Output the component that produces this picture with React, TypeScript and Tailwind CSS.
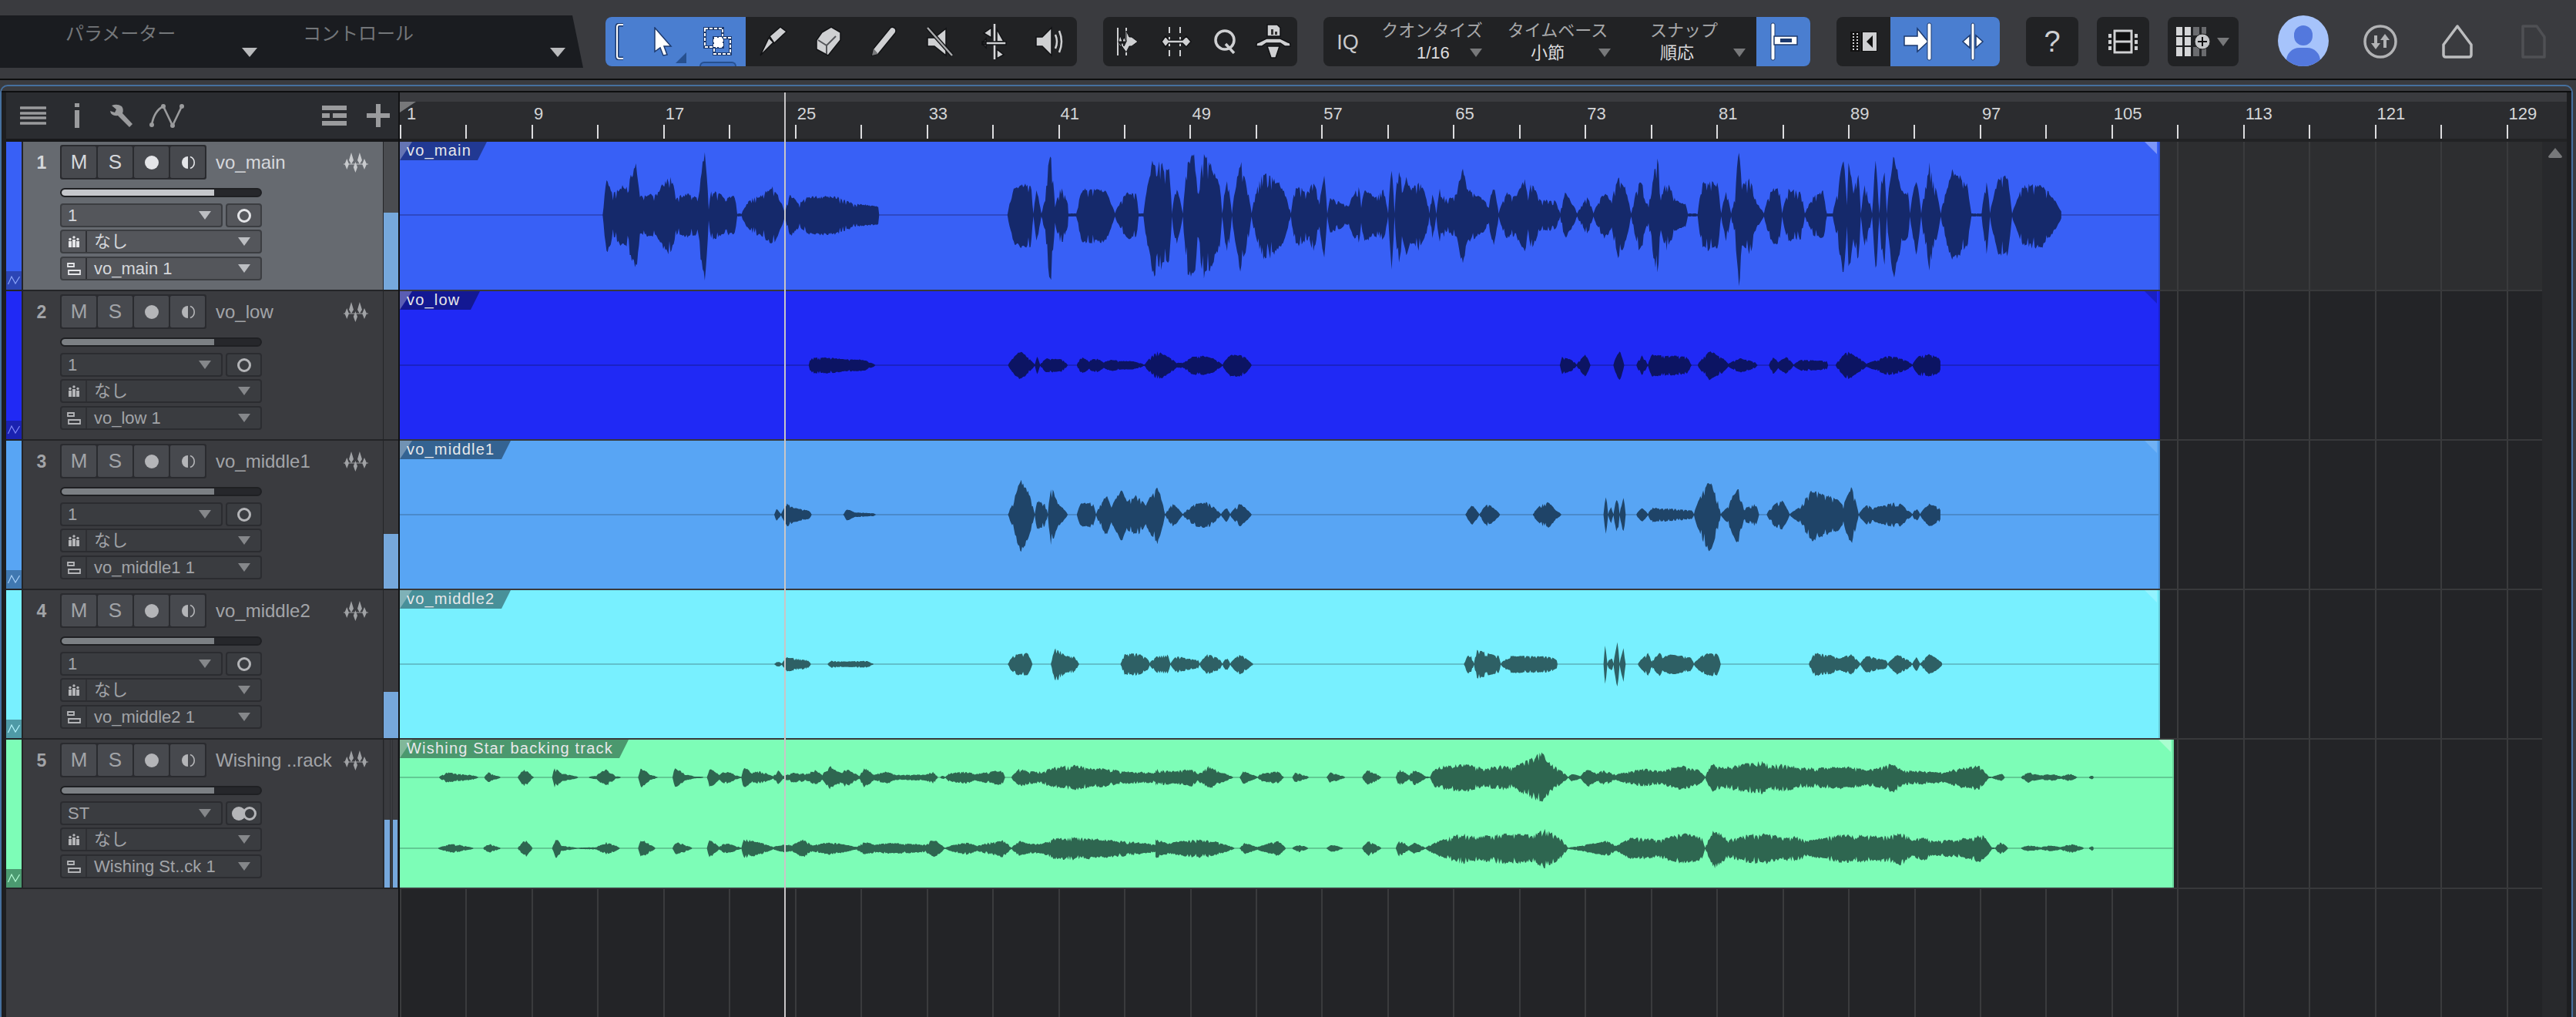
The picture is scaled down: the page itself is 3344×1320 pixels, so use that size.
import React from "react";

// waveform envelopes: [x, amplitude] pairs read off the picture
const mainA = [129,0,137,48,150,28,165,38,180,40,197,70,205,25,225,28,240,28,265,52,280,25,300,28,322,25,337,85,345,10,350,33,375,25,398,25,403,2,412,2,430,22,455,28,475,38,490,20,500,2,510,27,530,15,545,25,570,25,600,25,640,15,690,12,692,0,953,0,968,40,985,42,1000,42,1006,2,1012,33,1022,2,1030,20,1040,90,1050,10,1062,38,1076,15,1077,2,1093,2,1105,35,1125,35,1150,35,1172,2,1195,30,1215,30,1220,2,1230,2,1250,77,1262,70,1282,60,1288,2,1296,40,1310,2,1320,75,1333,80,1340,30,1353,82,1385,40,1390,2,1400,50,1410,2,1427,72,1440,40,1450,2,1472,60,1510,40,1530,2,1540,40,1568,30];
const mainB = [0,35,8,47,20,15,30,55,36,2,42,22,80,12,100,40,105,10,112,35,130,25,150,33,160,2,167,67,173,2,180,62,190,35,197,50,205,35,222,45,240,20,244,2,250,30,258,2,265,35,280,20,300,30,312,63,320,35,345,25,365,15,375,38,385,2,400,30,420,25,438,47,445,20,450,43,470,20,500,20,510,2,520,30,535,15,545,2,565,25,578,2,590,20,600,30,615,17,628,55,640,40,655,2,672,48,690,10,708,80,715,20,725,45,745,20,765,15,770,2,790,2,800,45,815,45,830,43,838,2,848,33,858,2,866,25,874,90,880,38,897,50,910,15,925,2,940,35,955,37,962,2,975,35,1000,30,1008,2,1025,25,1045,32,1053,2,1065,2,1075,30,1087,78,1094,15,1097,72,1107,30,1117,60,1122,2,1130,42,1145,2,1152,75,1160,2,1168,80,1175,2,1188,83,1205,33,1218,30,1222,2,1235,50,1245,2,1262,70,1272,40,1285,2,1308,60,1340,40,1347,2,1368,2,1378,50,1385,2,1402,50,1420,52,1430,2,1440,20,1452,40,1490,42,1510,25,1532,2];
const lowK = [50,0,53,28,75,28,95,22,120,20,135,5,137,0,310,0,318,30,326,50,335,30,345,2,348,30,352,2,360,25,380,22,388,2,400,2,406,30,415,15,425,25,435,10,445,20,455,15,470,15,480,10,488,2,505,50,520,30,530,8,540,10,550,30,560,35,575,28,590,2,600,38,615,38,628,2,1030,0,1033,30,1045,20,1052,2,1063,38,1070,2,1100,2,1105,40,1108,50,1114,2,1130,2,1137,35,1145,2,1150,38,1170,36,1195,30,1202,2,1210,2,1225,50,1240,30,1250,5,1265,25,1285,10,1288,2,1303,2,1308,30,1315,10,1325,30,1335,2,1345,20,1378,15,1380,2,1390,2,1405,50,1420,25,1430,5,1445,20,1460,35,1480,20,1490,2,1498,35,1512,40,1525,25,1528,2];
const mid1K = [5,0,8,20,14,2,22,40,30,25,50,15,54,2,95,0,100,20,110,8,135,5,138,0,310,0,318,50,326,125,335,90,345,2,348,50,358,40,362,2,366,100,375,40,388,2,400,2,405,40,420,45,425,2,438,70,445,25,458,90,465,50,478,70,490,35,505,100,515,2,525,40,538,2,555,40,570,45,588,2,595,25,600,2,612,40,628,2,907,2,915,35,925,2,935,40,952,2,995,2,1005,35,1015,45,1025,15,1032,2,1087,2,1090,70,1093,2,1097,30,1100,2,1105,70,1108,2,1113,60,1116,2,1130,2,1137,25,1145,2,1150,25,1185,20,1202,15,1205,2,1212,60,1225,125,1235,60,1240,2,1250,30,1262,100,1270,20,1285,40,1290,2,1300,2,1310,40,1320,50,1330,2,1345,30,1358,90,1375,70,1390,60,1400,30,1410,100,1420,2,1430,35,1440,25,1455,35,1470,45,1485,15,1490,2,1495,25,1500,2,1512,40,1525,25,1528,2];
const mid2K = [5,0,10,10,15,2,22,25,48,15,53,2,75,2,80,12,90,10,100,10,125,12,135,0,310,2,318,35,335,40,342,2,366,2,372,60,385,30,395,30,403,2,457,2,462,35,478,40,492,20,495,5,505,30,518,35,522,2,530,30,545,20,558,15,560,2,570,35,585,20,590,2,595,25,600,2,612,35,628,5,630,2,905,2,912,40,918,2,922,52,935,40,950,30,953,2,965,30,1015,28,1026,15,1027,2,1087,2,1089,70,1092,2,1097,30,1100,2,1105,80,1108,2,1113,60,1116,2,1132,2,1145,40,1150,10,1160,40,1165,25,1175,35,1200,25,1205,2,1215,30,1225,40,1235,40,1240,2,1355,2,1362,40,1380,35,1395,20,1410,35,1422,2,1430,30,1445,20,1455,15,1458,2,1470,35,1485,15,1490,2,1495,25,1500,2,1512,35,1530,2];
const backLA = [110,2,125,20,145,15,175,10,190,2,202,2,210,20,225,8,235,2,270,2,283,35,300,5,303,2,340,2,345,40,360,15,380,8,393,2,415,2,430,8,450,33,470,5,480,2,515,2,520,40,540,10,555,2,585,2,590,40,610,12,630,4,648,2,655,2,660,38,680,10,692,25,720,5,725,2,728,45,745,20,762,25,790,5,800,28,810,5,830,20,860,15,875,30,890,10,905,45,920,25,938,35,965,5,975,38,995,10,1020,25,1040,10,1100,12,1115,25,1125,2,1130,2,1135,8,1140,2,1145,15,1185,25,1200,12,1255,30,1262,2,1275,2,1290,35,1310,25,1340,25,1360,40,1398,50,1430,40,1470,35,1500,25,1568,20];
const backLB = [0,35,10,30,25,25,55,35,65,15,80,45,95,25,115,5,118,2,128,2,133,25,150,8,155,2,160,15,185,25,195,2,208,2,212,20,233,2,260,2,265,20,288,2,314,2,322,30,343,2,365,2,370,32,385,8,393,30,410,5,417,2,425,40,445,50,470,55,500,35,525,50,545,40,585,100,600,55,627,2,632,15,645,5,657,35,670,15,680,30,700,10,710,20,740,35,770,25,795,50,825,30,835,2,845,55,860,40,920,65,935,50,950,55,980,40,1010,40,1050,45,1080,30,1100,40,1120,60,1135,30,1200,20,1215,35,1250,50,1265,5,1270,2,1285,15,1290,2,1315,2,1325,20,1345,8,1360,15,1375,5,1388,15,1400,2,1418,2,1422,8,1426,2];
const backRA = [108,2,135,18,165,8,180,2,200,2,210,18,235,2,270,2,285,35,300,2,340,2,347,42,360,10,390,2,430,5,450,25,478,2,515,2,520,35,550,2,585,2,592,25,625,2,655,2,660,35,680,5,692,22,725,2,730,38,760,25,790,5,810,15,830,15,850,35,870,12,905,25,960,5,975,25,1000,15,1025,22,1100,15,1115,35,1140,2,1150,10,1185,25,1205,10,1255,35,1275,2,1290,30,1310,20,1340,20,1360,40,1400,45,1470,35,1530,25,1568,15];
const backRB = [0,38,20,20,55,35,80,35,100,20,120,2,128,2,135,22,155,5,185,30,198,2,208,2,218,15,232,2,260,2,268,15,285,2,314,2,322,30,343,2,365,2,370,32,385,8,393,22,410,2,430,30,465,60,490,45,525,60,575,55,590,78,610,50,627,2,650,12,685,30,700,10,725,45,765,35,800,60,830,45,835,2,848,75,870,35,900,55,925,60,950,45,975,50,990,30,1040,55,1100,50,1135,65,1150,30,1165,50,1180,30,1220,35,1255,55,1270,5,1275,2,1283,25,1295,2,1315,2,1325,12,1345,5,1360,12,1375,5,1390,18,1410,2,1418,2,1422,10,1426,2];

const CLIP_X = 519;

function toPoints(k: number[], ox: number, sx: number, sy: number) {
  const out: [number, number][] = [];
  for (let i = 0; i < k.length; i += 2) out.push([ox + k[i] / sx - CLIP_X, k[i + 1] / sy]);
  return out;
}

function wavePoints(knots: [number, number][], cy: number, seed: number, jitter: number) {
  let s = seed;
  const rnd = () => {
    s = (s * 16807) % 2147483647;
    return s / 2147483647;
  };
  const top: string[] = [];
  const bottom: string[] = [];
  for (let i = 0; i < knots.length - 1; i++) {
    const [x0, a0] = knots[i];
    const [x1, a1] = knots[i + 1];
    if (a0 <= 1 && a1 <= 1) {
      top.push(`${x0.toFixed(1)},${cy}`, `${x1.toFixed(1)},${cy}`);
      bottom.unshift(`${x1.toFixed(1)},${cy}`, `${x0.toFixed(1)},${cy}`);
      continue;
    }
    const steps = Math.max(1, Math.round((x1 - x0) / 1.3));
    for (let j = 0; j < steps; j++) {
      const x = x0 + ((x1 - x0) * j) / steps;
      const t = j / steps;
      // bodies stay fat, only the edges fall off fast
      const e = a1 > a0 ? Math.pow(t, 0.8) : Math.pow(t, 1.3);
      const a = a0 + (a1 - a0) * e;
      const notch = rnd() < 0.14 ? 0.72 : 1;
      const up = a * notch * (1 - jitter * rnd());
      const dn = a * notch * (1.06 - jitter * rnd());
      top.push(`${x.toFixed(1)},${(cy - up).toFixed(1)}`);
      bottom.unshift(`${x.toFixed(1)},${(cy + dn).toFixed(1)}`);
    }
  }
  return [...top, ...bottom].join(" ");
}

const waves = {
  main: [{ cy: 95, pts: [...toPoints(mainA, 700, 1.568, 1), ...toPoints(mainB, 1700, 1.568, 1)], seed: 11, j: 0.16 }],
  low: [{ cy: 96, pts: toPoints(lowK, 1000, 1.005, 2.694), seed: 23, j: 0.14 }],
  mid1: [{ cy: 96, pts: toPoints(mid1K, 1000, 1.005, 2.694), seed: 37, j: 0.14 }],
  mid2: [{ cy: 96, pts: toPoints(mid2K, 1000, 1.005, 2.694), seed: 41, j: 0.14 }],
  back: [
    { cy: 49, pts: [...toPoints(backLA, 500, 1.568, 3), ...toPoints(backLB, 1500, 1.17, 3)], seed: 53, j: 0.25 },
    { cy: 141, pts: [...toPoints(backRA, 500, 1.568, 3), ...toPoints(backRB, 1500, 1.17, 3)], seed: 67, j: 0.25 },
  ],
};

function Tri({ w = 16, h = 11, fill = "#b8babc" }: { w?: number; h?: number; fill?: string }) {
  return (
    <svg width={w} height={h} viewBox={`0 0 ${w} ${h}`} className="block shrink-0">
      <polygon points={`0,0 ${w},0 ${w / 2},${h}`} fill={fill} />
    </svg>
  );
}

function WaveIcon({ color }: { color: string }) {
  return (
    <svg width="32" height="26" viewBox="0 0 32 26" className="block">
      <path d="M4.3 8 L7 15 L4.3 22 L1.5 15Z M10 0 L13 10 L10 15 L7 10Z M15.4 12 L18 19 L15.4 26 L12.8 19Z M20.9 0 L24 10 L20.9 15 L18 10Z M27 8 L30 15 L27 22 L24.2 15Z" fill={color} />
      <path d="M0 15 H32" stroke={color} strokeWidth="1" />
    </svg>
  );
}

function AutoIcon({ color }: { color: string }) {
  return (
    <svg width="16" height="12" viewBox="0 0 16 12" className="block">
      <path d="M0.5 11 L5 1 L10 10 L15.5 1" fill="none" stroke={color} strokeWidth="1.2" />
    </svg>
  );
}

function Cell({ w, children, active }: { w: string; children?: React.ReactNode; active?: boolean }) {
  return <div className={`${w} ${active ? "bg-[#4a7ed0]" : ""} h-full flex items-center justify-center shrink-0`}>{children}</div>;
}

const ico = { fill: "#cfd0d2", stroke: "#111214", strokeWidth: 1.5 };

function Toolbar() {
  return (
    <div className="h-[102px] flex items-start shrink-0">
      <div className="mt-[20px] w-[757px] h-[68px] bg-[#1a1c20] flex text-[24px] text-[#74777a] leading-none [clip-path:polygon(0_0,743px_0,757px_100%,0_100%)]">
        <div className="w-[350px] flex flex-col">
          <div className="pl-[85px] pt-[12px]">パラメーター</div>
          <div className="pl-[314px] mt-[6px]"><Tri w={20} h={12} fill="#b9babc" /></div>
        </div>
        <div className="flex flex-col">
          <div className="pl-[43px] pt-[12px]">コントロール</div>
          <div className="pl-[364px] mt-[6px]"><Tri w={20} h={12} fill="#b9babc" /></div>
        </div>
      </div>

      <div className="ml-[29px] mt-[22px] h-[64px] w-[612px] flex rounded-[8px] bg-[#212224] overflow-hidden">
        <div className="w-[38px] h-full bg-[#4a7ed0] flex items-center justify-center shrink-0">
          <svg width="14" height="48" viewBox="0 0 14 48"><path d="M11 2 H6 Q3 2 3 5 V43 Q3 46 6 46 H11" fill="none" stroke="#1d3a6e" strokeWidth="5" /><path d="M11 2 H6 Q3 2 3 5 V43 Q3 46 6 46 H11" fill="none" stroke="#fff" strokeWidth="2" /></svg>
        </div>
        <div className="w-[72px] h-full bg-[#4a7ed0] flex items-center justify-center relative shrink-0">
          <svg width="26" height="38" viewBox="0 0 26 38"><polygon points="3,1 24,25 15,25 19,36 14,37 10,27 3,32" fill="#fff" stroke="#1d3a6e" strokeWidth="1.5" /></svg>
          <svg width="14" height="14" viewBox="0 0 14 14" className="absolute right-[5px] bottom-[4px]"><polygon points="14,0 14,14 0,14" fill="#27508f" /></svg>
        </div>
        <div className="w-[72px] h-full bg-[#4a7ed0] flex items-center justify-center relative shrink-0">
          <svg width="38" height="38" viewBox="0 0 38 38">
            <rect x="2" y="2" width="23" height="24" fill="none" stroke="#1d3a6e" strokeWidth="4" />
            <rect x="2" y="2" width="23" height="24" fill="none" stroke="#fff" strokeWidth="2" strokeDasharray="4 2" />
            <rect x="14" y="14" width="21" height="21" fill="none" stroke="#1d3a6e" strokeWidth="4" />
            <rect x="14" y="14" width="21" height="21" fill="none" stroke="#fff" strokeWidth="2" strokeDasharray="4 2" />
            <rect x="14" y="14" width="11" height="12" fill="#fff" />
          </svg>
          <div className="absolute left-[12px] bottom-0 w-[48px] h-[6px] border-t-2 border-x-2 border-[#27508f] rounded-t-[6px] bg-[#3d6fc0]" />
        </div>
        <Cell w="w-[71px]">
          <svg width="38" height="40" viewBox="0 0 38 40"><path d="M2 38 L13 15 L19 21 Z" {...ico} /><path d="M14 13 L28 1 L36 7 L20 22 Z" {...ico} /></svg>
        </Cell>
        <Cell w="w-[72px]">
          <svg width="36" height="40" viewBox="0 0 36 40"><path d="M10 8 L22 1 L34 8 V18 L18 38 L3 30 V18 Z" {...ico} /><path d="M5 18 L16 25 L28 13 M16 25 V36" fill="none" stroke="#55565a" strokeWidth="2" /></svg>
        </Cell>
        <Cell w="w-[72px]">
          <svg width="36" height="40" viewBox="0 0 36 40"><path d="M3 38 L5 29 L27 2 Q30 0 33 3 Q35 6 33 9 L11 36 Z" {...ico} /><path d="M5 29 L11 36 L3 38Z" fill="#77787a" /></svg>
        </Cell>
        <Cell w="w-[72px]">
          <svg width="38" height="40" viewBox="0 0 38 40"><path d="M4 15 H13 L28 3 V38 L13 26 H4 Z" {...ico} /><path d="M4 2 L36 38" stroke="#111214" strokeWidth="5" /><path d="M4 2 L36 38" stroke="#a9aaac" strokeWidth="2.5" /></svg>
        </Cell>
        <Cell w="w-[72px]">
          <svg width="36" height="48" viewBox="0 0 36 48"><path d="M18 1 V47" stroke="#d8d8da" strokeWidth="2.5" /><path d="M14 6 L4 13 L14 19 Z M21 8 L30 24 L21 24 Z M21 34 L30 41 L21 46 Z" {...ico} /><path d="M2 24 H33 V28 H2Z M7 20 L2 26 L7 32Z" {...ico} /></svg>
        </Cell>
        <Cell w="w-[71px]">
          <svg width="40" height="42" viewBox="0 0 40 42"><path d="M2 15 H10 L22 3 V39 L10 27 H2 Z" {...ico} /><path d="M27 12 Q31 21 27 30" fill="none" stroke="#cfd0d2" strokeWidth="2.5" /><path d="M32 7 Q38 21 32 35" fill="none" stroke="#cfd0d2" strokeWidth="2.5" /></svg>
        </Cell>
      </div>

      <div className="ml-[34px] mt-[22px] h-[64px] w-[252px] flex rounded-[8px] bg-[#212224]">
        <Cell w="w-[63px]">
          <svg width="30" height="40" viewBox="0 0 30 40"><path d="M2 2 V38 M13 2 V38" stroke="#cfd0d2" strokeWidth="2" /><path d="M3 20 L5 12 L8 20 L10 14 L13 20 L13 6 L17 14 L20 14 L28 20 L20 26 L17 26 L13 34Z M3 20 L5 28 L8 20 L10 26 L13 20Z" fill="#cfd0d2" stroke="#111214" strokeWidth="1" /></svg>
        </Cell>
        <Cell w="w-[63px]">
          <svg width="40" height="40" viewBox="0 0 40 40"><path d="M11 1 V9 M11 14 V26 M11 31 V39 M25 1 V9 M25 14 V26 M25 31 V39" stroke="#cfd0d2" strokeWidth="2" /><path d="M1 20 L6 13 L10 18 H28 L33 13 L39 20 L33 27 L28 22 H10 L6 27 Z" {...ico} /></svg>
        </Cell>
        <Cell w="w-[63px]">
          <svg width="32" height="32" viewBox="0 0 32 32"><circle cx="16" cy="14" r="12" fill="none" stroke="#cfd0d2" strokeWidth="3.5" /><path d="M17 19 L28 31" stroke="#cfd0d2" strokeWidth="3.5" /></svg>
        </Cell>
        <Cell w="w-[63px]">
          <svg width="46" height="46" viewBox="0 0 46 46"><path d="M15 1 H28 L32 5 V16 H15 Z" {...ico} /><path d="M20 7 H23 V14 H20 Z M25 10 H28 V14 H25 Z" fill="#333" /><path d="M1 27 Q1 24 4 24 L14 19 H32 L42 24 Q45 24 45 27 V29 H38 L32 25 H14 L8 29 H1 Z" {...ico} /><path d="M15 29 H31 L26 44 H20 Z" {...ico} /></svg>
        </Cell>
      </div>

      <div className="ml-[34px] mt-[22px] h-[64px] w-[632px] flex rounded-[8px] bg-[#212224] overflow-hidden">
        <div className="w-[66px] pr-[3px] h-full flex items-center justify-center text-[27px] text-[#c8c9cb] pt-[3px] shrink-0">IQ</div>
        <div className="w-[150px] mr-[7px] shrink-0">
          <div className="h-[28px] pt-[4px] text-center text-[22px] leading-[28px] text-[#a7a8aa]">クオンタイズ</div>
          <div className="h-[36px] flex items-center text-[22px] text-[#dcdcde]">
            <span className="w-[124px] pl-[55px]">1/16</span>
            <Tri fill="#77787a" />
          </div>
        </div>
        <div className="w-[162px] shrink-0">
          <div className="h-[28px] pt-[4px] text-center text-[22px] leading-[28px] text-[#a7a8aa]">タイムベース</div>
          <div className="h-[36px] flex items-center text-[22px] text-[#dcdcde]">
            <span className="w-[134px] pl-[46px]">小節</span>
            <Tri fill="#77787a" />
          </div>
        </div>
        <div className="w-[177px] shrink-0">
          <div className="h-[28px] w-[166px] pt-[4px] text-center text-[22px] leading-[28px] text-[#a7a8aa]">スナップ</div>
          <div className="h-[36px] flex items-center text-[22px] text-[#dcdcde]">
            <span className="w-[147px] pl-[52px]">順応</span>
            <Tri fill="#77787a" />
          </div>
        </div>
        <div className="w-[70px] h-full bg-[#4a7ed0] flex items-center justify-center shrink-0">
          <svg width="38" height="50" viewBox="0 0 38 50"><rect x="3" y="1" width="5" height="48" rx="2" fill="#fff" stroke="#1d3a6e" /><rect x="7" y="18" width="30" height="11" fill="#fff" stroke="#1d3a6e" strokeWidth="1.5" /><rect x="15" y="21" width="15" height="5" fill="#1d3a6e" /></svg>
        </div>
      </div>

      <div className="ml-[34px] mt-[22px] h-[64px] w-[212px] flex rounded-[8px] bg-[#212224] overflow-hidden">
        <Cell w="w-[70px]">
          <svg width="36" height="26" viewBox="0 0 36 26"><rect x="1" y="0" width="12" height="26" fill="#111" /><path d="M5 2 V24 M10 2 V24" stroke="#cfd0d2" strokeWidth="2" strokeDasharray="2 2" /><rect x="16" y="0" width="20" height="26" fill="#cfd0d2" stroke="#111" strokeWidth="2" /><polygon points="22,13 30,5 30,21" fill="#111" /></svg>
        </Cell>
        <div className="w-[71px] h-full bg-[#4a7ed0] flex items-center justify-center shrink-0">
          <svg width="38" height="50" viewBox="0 0 38 50"><path d="M1 18 H18 V8 L32 25 L18 38 V30 H1 Z" fill="#fff" stroke="#1d3a6e" strokeWidth="1.5" /><rect x="31" y="1" width="5" height="48" rx="2" fill="#fff" stroke="#1d3a6e" /></svg>
        </div>
        <div className="w-[71px] h-full bg-[#4a7ed0] flex items-center justify-center shrink-0">
          <svg width="30" height="50" viewBox="0 0 30 50"><rect x="13" y="1" width="4" height="48" rx="2" fill="#fff" stroke="#1d3a6e" /><path d="M11 17 V33 L2 25 Z M19 17 V33 L28 25 Z" fill="#fff" stroke="#1d3a6e" strokeWidth="1.5" /></svg>
        </div>
      </div>

      <div className="ml-[34px] mt-[22px] h-[64px] w-[68px] rounded-[8px] bg-[#212224] flex items-center justify-center text-[38px] text-[#cfd0d2]">?</div>
      <div className="ml-[24px] mt-[22px] h-[64px] w-[68px] rounded-[8px] bg-[#212224] flex items-center justify-center">
        <svg width="40" height="34" viewBox="0 0 40 34"><rect x="6" y="1" width="28" height="32" fill="#111" /><rect x="9" y="3" width="22" height="28" fill="none" stroke="#d0d1d3" strokeWidth="3" /><path d="M9 17 H31" stroke="#d0d1d3" strokeWidth="3" /><path d="M3 7 V12 M3 15 V20 M3 23 V28 M37 7 V12 M37 15 V20 M37 23 V28" stroke="#d0d1d3" strokeWidth="4" /></svg>
      </div>
      <div className="ml-[24px] mt-[22px] h-[64px] w-[92px] rounded-[8px] bg-[#212224] flex items-center pl-[10px]">
        <svg width="48" height="40" viewBox="0 0 48 40">
          <path d="M1 1 H9 V12 H1Z M12 1 H20 V12 H12Z M1 14 H9 V25 H1Z M12 14 H20 V25 H12Z M1 27 H9 V39 H1Z M12 27 H20 V39 H12Z" fill="#d5d6d8" />
          <path d="M23 1 H31 V12 H23Z M23 27 H31 V39 H23Z M34 1 H40 V10 H34Z M34 29 H40 V39 H34Z" fill="#6a6b6e" />
          <circle cx="35" cy="20" r="10" fill="#c4c5c7" stroke="#222" />
          <path d="M35 14 V26 M29 20 H41" stroke="#111" strokeWidth="2" />
        </svg>
        <div className="ml-[6px]"><Tri fill="#77787a" /></div>
      </div>

      <div className="ml-[51px] mt-[20px] w-[66px] h-[66px] rounded-full bg-[#a6c3fb] overflow-hidden relative shrink-0">
        <div className="absolute left-[21px] top-[13px] w-[24px] h-[26px] rounded-full bg-[#5378dd]" />
        <div className="absolute left-[11px] top-[42px] w-[44px] h-[34px] rounded-full bg-[#5378dd]" />
      </div>
      <div className="ml-[45px] mt-[32px] shrink-0">
        <svg width="44" height="44" viewBox="0 0 44 44"><circle cx="22" cy="22" r="20" fill="none" stroke="#b2b3b5" strokeWidth="3.5" /><path d="M14 14 H18 V24 H22 L16 32 L10 24 H14 Z M26 30 H30 V20 H34 L28 12 L22 20 H26 Z" fill="#b2b3b5" /></svg>
      </div>
      <div className="ml-[58px] mt-[32px] shrink-0">
        <svg width="40" height="44" viewBox="0 0 40 44"><path d="M20 2 L38 26 V39 Q38 42 35 42 H5 Q2 42 2 39 V26 Z" fill="none" stroke="#bcbdbf" strokeWidth="3.5" strokeLinejoin="round" /></svg>
      </div>
      <div className="ml-[63px] mt-[32px] shrink-0">
        <svg width="32" height="44" viewBox="0 0 32 44"><path d="M2 2 H20 L30 16 V42 H2 Z" fill="none" stroke="#4f5054" strokeWidth="3.5" strokeLinejoin="round" /></svg>
      </div>
    </div>
  );
}

type Track = {
  n: number;
  name: string;
  out: string;
  strip: string;
  auto: string;
  autoLine: string;
  channel: string;
  meter: string;
  selected?: boolean;
  stereo?: boolean;
};

const tracks: Track[] = [
  { n: 1, name: "vo_main", out: "vo_main 1", strip: "bg-[#3860f6]", auto: "bg-[#2b45b5]", autoLine: "#8aa4f8", channel: "1", meter: "h-[100px]", selected: true },
  { n: 2, name: "vo_low", out: "vo_low 1", strip: "bg-[#2029f5]", auto: "bg-[#1a22b0]", autoLine: "#7f86f8", channel: "1", meter: "h-0" },
  { n: 3, name: "vo_middle1", out: "vo_middle1 1", strip: "bg-[#58a5f4]", auto: "bg-[#4078b0]", autoLine: "#a8d0f8", channel: "1", meter: "h-[71px]" },
  { n: 4, name: "vo_middle2", out: "vo_middle2 1", strip: "bg-[#78f0ff]", auto: "bg-[#4f9aa6]", autoLine: "#b4f4fc", channel: "1", meter: "h-[60px]" },
  { n: 5, name: "Wishing ..rack", out: "Wishing St..ck 1", strip: "bg-[#7dfdb7]", auto: "bg-[#4b9a70]", autoLine: "#b4fcd4", channel: "ST", meter: "h-[88px]", stereo: true },
];

function TrackHead({ t }: { t: Track }) {
  const sel = t.selected;
  const text = sel ? "text-[#d6d8dc]" : "text-[#a2a4a8]";
  const ctl = sel ? "bg-[#54565b] border-[#3b3d41]" : "bg-[#3a3c40] border-[#2b2c30]";
  const tri = sel ? "#bcbec2" : "#85878a";
  const mark = sel ? "#e4e5e8" : "#b4b5b8";
  return (
    <div className="h-[192px] flex">
      <div className="w-[20px] flex flex-col shrink-0">
        <div className={`flex-1 ${t.strip}`} />
        <div className={`h-[24px] ${t.auto} flex items-center justify-center`}>
          <AutoIcon color={t.autoLine} />
        </div>
      </div>
      <div className={`ml-[2px] w-[467px] shrink-0 flex ${sel ? "bg-[#666a70]" : "bg-[#3a3b3f]"} ${text}`}>
        <div className="w-[48px] pt-[13px] text-center text-[23px] font-bold leading-[28px] shrink-0">{t.n}</div>
        <div className="w-[400px] pt-[4px]">
          <div className="flex items-center h-[45px]">
            <div className="w-[190px] h-[45px] flex gap-[2px] p-[2px] rounded-[3px] bg-[#2a2b2f] text-[26px] shrink-0">
              <div className="flex-1 bg-[#47494e] flex items-center justify-center rounded-[2px]">M</div>
              <div className="flex-1 bg-[#47494e] flex items-center justify-center rounded-[2px]">S</div>
              <div className="flex-1 bg-[#47494e] flex items-center justify-center rounded-[2px]">
                <div className={`w-[18px] h-[18px] rounded-full ${sel ? "bg-[#e4e5e8]" : "bg-[#b4b5b8]"}`} />
              </div>
              <div className="flex-1 bg-[#47494e] flex items-center justify-center rounded-[2px]">
                <svg width="20" height="20" viewBox="0 0 20 20">
                  <path d="M10 2 A8 8 0 0 0 10 18 Z" fill={mark} />
                  <path d="M13 2.5 A8 8 0 0 1 13 17.5" fill="none" stroke={mark} strokeWidth="1.6" />
                </svg>
              </div>
            </div>
            <div className="ml-[12px] flex-1 text-[24px] whitespace-nowrap">{t.name}</div>
            <WaveIcon color={sel ? "#c8cacd" : "#a0a2a5"} />
          </div>
          <div className="mt-[11px] w-[262px] h-[12px] rounded-full bg-[#26272b] border-2 border-[#1f2023] overflow-hidden">
            <div className={`w-[198px] h-full rounded-l-full ${sel ? "bg-[#c5c7cb]" : "bg-[#7c8084]"}`} />
          </div>
          <div className="mt-[8px] w-[262px] flex gap-[4px] text-[22px] leading-none">
            <div className={`w-[211px] h-[31px] flex items-center justify-between pl-[8px] pr-[13px] rounded-[4px] border-2 ${ctl}`}>
              <span>{t.channel}</span>
              <Tri fill={tri} />
            </div>
            <div className={`w-[47px] h-[31px] flex items-center justify-center rounded-[4px] border-2 ${ctl}`}>
              {t.stereo ? (
                <svg width="34" height="20" viewBox="0 0 34 20"><circle cx="10" cy="10" r="9" fill={mark} /><circle cx="24" cy="10" r="7.5" fill="#3a3c40" stroke={mark} strokeWidth="3" /></svg>
              ) : (
                <svg width="20" height="20" viewBox="0 0 20 20"><circle cx="10" cy="10" r="7.5" fill="none" stroke={mark} strokeWidth="3" /></svg>
              )}
            </div>
          </div>
          <div className={`mt-[3px] w-[262px] h-[31px] flex items-center rounded-[4px] border-2 text-[22px] leading-none ${ctl}`}>
            <div className="w-[33px] h-full flex items-center justify-center border-r-2 border-[#2f3034] shrink-0">
              <svg width="16" height="16" viewBox="0 0 16 16"><path d="M1 7 H5 V15 H1Z M6 5 H10 V15 H6Z M11 7 H15 V15 H11Z" fill={mark} /><circle cx="3" cy="4.5" r="1.7" fill={mark} /><circle cx="8" cy="2" r="1.7" fill={mark} /><circle cx="13" cy="4.5" r="1.7" fill={mark} /></svg>
            </div>
            <span className="pl-[9px] flex-1">なし</span>
            <div className="mr-[13px]"><Tri fill={tri} /></div>
          </div>
          <div className={`mt-[4px] w-[262px] h-[31px] flex items-center rounded-[4px] border-2 text-[22px] leading-none ${ctl}`}>
            <div className="w-[33px] h-full flex items-center justify-center border-r-2 border-[#2f3034] shrink-0">
              <svg width="18" height="16" viewBox="0 0 18 16"><path d="M1 1 H9 V5 H1Z M2 10 H17 V15 H2Z" fill="none" stroke={mark} strokeWidth="1.8" /></svg>
            </div>
            <span className="pl-[9px] flex-1 whitespace-nowrap">{t.out}</span>
            <div className="mr-[13px]"><Tri fill={tri} /></div>
          </div>
        </div>
      </div>
      <div className={`ml-[1px] w-[19px] shrink-0 flex gap-[2px] ${sel ? "bg-[#4a4c50]" : "bg-[#3a3b3f]"}`}>
        {t.stereo ? (
          <>
            <div className="flex-1 flex flex-col justify-end border-x border-[#303135]"><div className={`${t.meter} bg-[#76a8dc]`} /></div>
            <div className="flex-1 flex flex-col justify-end border-x border-[#303135]"><div className={`${t.meter} bg-[#76a8dc]`} /></div>
          </>
        ) : (
          <div className="flex-1 flex flex-col justify-end"><div className={`${t.meter} bg-[#76a8dc]`} /></div>
        )}
      </div>
    </div>
  );
}

type ClipDef = {
  label: string;
  bg: string;
  w: string;
  tab: string;
  edge: string;
  corner: string;
  wave: string;
  line: string;
  width: number;
  lanes: { cy: number; pts: [number, number][]; seed: number; j: number }[];
};

const clips: ClipDef[] = [
  { label: "vo_main", bg: "bg-[#3860f6]", w: "w-[2285px]", tab: "w-[113px]", edge: "border-[#2f50d0]", corner: "bg-white/35", wave: "#15296b", line: "#2d49c4", width: 2285, lanes: waves.main },
  { label: "vo_low", bg: "bg-[#2029f5]", w: "w-[2285px]", tab: "w-[104px]", edge: "border-[#1a22cf]", corner: "bg-black/20", wave: "#0c1463", line: "#1a22c5", width: 2285, lanes: waves.low },
  { label: "vo_middle1", bg: "bg-[#58a5f4]", w: "w-[2285px]", tab: "w-[144px]", edge: "border-[#4b8cd0]", corner: "bg-white/15", wave: "#1f4468", line: "#4a8acb", width: 2285, lanes: waves.mid1 },
  { label: "vo_middle2", bg: "bg-[#78f0ff]", w: "w-[2285px]", tab: "w-[144px]", edge: "border-[#66ccd9]", corner: "bg-white/20", wave: "#2e6065", line: "#62c0cc", width: 2285, lanes: waves.mid2 },
  { label: "Wishing Star backing track", bg: "bg-[#7dfdb7]", w: "w-[2303px]", tab: "w-[297px]", edge: "border-[#6ad79c]", corner: "bg-white/35", wave: "#2e6650", line: "#62ca94", width: 2303, lanes: waves.back },
];

function Clip({ c }: { c: ClipDef }) {
  return (
    <div className={`relative h-[192px] shrink-0 ${c.w} ${c.bg} border-r-2 ${c.edge}`}>
      <svg width={c.width} height="192" viewBox={`0 0 ${c.width} 192`} className="block">
        {c.lanes.map(l => (
          <g key={l.seed}>
            <rect x="0" y={l.cy - 1} width={c.width} height="2" fill={c.line} />
            <polygon points={wavePoints(l.pts, l.cy, l.seed, l.j)} fill={c.wave} />
          </g>
        ))}
      </svg>
      <div className={`absolute left-0 top-0 h-[24px] ${c.tab} bg-black/40 [clip-path:polygon(0_0,100%_0,calc(100%-12px)_100%,0_100%)]`}>
        <span className="block pl-[9px] text-[20px] leading-[22px] tracking-[1.2px] text-[#e8e8ea] whitespace-nowrap">{c.label}</span>
      </div>
      <div className="absolute left-0 top-0 w-[16px] h-[24px] bg-white/30 [clip-path:polygon(0_0,100%_0,0_100%)]" />
      <div className={`absolute right-[2px] top-0 w-[16px] h-[16px] ${c.corner} [clip-path:polygon(0_0,100%_0,100%_100%)]`} />
    </div>
  );
}

const GRID = "bg-[repeating-linear-gradient(90deg,#3a3b3d_0,#3a3b3d_2px,transparent_2px,transparent_85.46px)]";
const rulerMarks = Array.from({ length: 33 }, (_, i) => i);

export default function App() {
  return (
    <div className="w-[3344px] h-[1320px] bg-[#3a3b3f] overflow-hidden flex flex-col relative [font-family:'Liberation_Sans','Noto_Sans_CJK_JP',sans-serif]">
      <Toolbar />
      <div className="h-[2px] bg-[#0d0e0f] shrink-0" />
      <div className="mt-[6px] mr-[4px] flex-1 min-h-0 border-t-2 border-r-2 border-l-2 border-[#46709f] rounded-t-[10px] flex flex-col">
        <div className="h-[6px] shrink-0" />
        <div className="h-[2px] bg-[#0d0e0f] shrink-0" />
        <div className="flex-1 min-h-0 flex bg-[#1d1e20] pl-[6px] pr-[6px]">
          <div className="w-[509px] shrink-0 flex flex-col bg-[#3a3b3f]">
            <div className="h-[60px] bg-[#2a2c30] flex items-center pl-[18px] shrink-0">
              <svg width="34" height="24" viewBox="0 0 34 24"><path d="M1 2 H33 M1 9 H33 M1 15 H33 M1 22 H33" stroke="#9a9b9d" strokeWidth="3.4" strokeLinecap="round" /></svg>
              <svg width="8" height="32" viewBox="0 0 8 32" className="ml-[36px]"><rect x="1" y="0" width="6" height="5" fill="#9a9b9d" /><rect x="1" y="9" width="6" height="23" fill="#9a9b9d" /></svg>
              <svg width="30" height="32" viewBox="0 0 30 32" className="ml-[38px]"><path d="M16 4 Q10 0 3 3 L9 8 L7 12 L1 10 Q2 17 11 16 L26 31 L30 27 L17 13 Q19 8 16 4Z" fill="#9a9b9d" /></svg>
              <svg width="46" height="32" viewBox="0 0 46 32" className="ml-[22px]"><path d="M3 28 Q6 10 18 4 M18 4 L30 29 L42 4" fill="none" stroke="#9a9b9d" strokeWidth="2.6" /><circle cx="3" cy="28" r="3" fill="#9a9b9d" /><circle cx="18" cy="4" r="3" fill="#9a9b9d" /><circle cx="30" cy="29" r="3" fill="#9a9b9d" /><circle cx="42" cy="4" r="3" fill="#9a9b9d" /></svg>
              <svg width="32" height="26" viewBox="0 0 32 26" className="ml-[178px]"><path d="M0 0 H32 V6 H0Z M0 10 H10 V16 H0Z M14 10 H32 V16 H14Z M0 20 H32 V26 H0Z" fill="#9a9b9d" /></svg>
              <svg width="30" height="30" viewBox="0 0 30 30" className="ml-[26px]"><path d="M12 0 H18 V12 H30 V18 H18 V30 H12 V18 H0 V12 H12Z" fill="#9a9b9d" /></svg>
            </div>
            <div className="h-[4px] bg-[#18191b] shrink-0" />
            {tracks.map(t => (
              <div key={t.n} className="border-b-2 border-[#232427] bg-[#232427]">
                <TrackHead t={t} />
              </div>
            ))}
          </div>
          <div className="w-[2px] bg-[#111214] shrink-0" />
          <div className="flex-1 min-w-0 flex flex-col relative bg-[#232427]">
            <div className="h-[12px] bg-[#3a3b3f] shrink-0" />
            <div className="h-[52px] bg-[#2b2c2f] flex shrink-0 relative border-b-4 border-[#212224] overflow-hidden">
              {rulerMarks.map(i => (
                <div key={i} className="w-[85.46px] shrink-0 flex flex-col">
                  <div className={`h-[30px] pt-[3px] ${i === 0 ? "pl-[9px]" : "pl-[3px]"} text-[22px] leading-[26px] text-[#d4d5d7]`}>
                    {i % 2 === 0 ? i * 4 + 1 : ""}
                  </div>
                  <div className="w-[2px] h-[18px] bg-[#dcdcde]" />
                </div>
              ))}
              <div className="absolute left-0 top-0 w-[21px] h-[14px] bg-[#77787a] [clip-path:polygon(0_0,100%_0,0_100%)]" />
            </div>
            <div className="flex-1 min-h-0 flex">
              <div className="flex-1 min-w-0 flex flex-col">
                {clips.map((c, i) => (
                  <div key={c.label} className={`h-[194px] shrink-0 border-b-2 border-[#38393b] ${i === 0 ? "bg-[#2d2e30]" : "bg-[#232427]"} ${GRID}`}>
                    <Clip c={c} />
                  </div>
                ))}
                <div className={`flex-1 bg-[#232427] ${GRID}`} />
              </div>
              <div className="w-[32px] bg-[#28292c] pt-[8px] pl-[8px] shrink-0">
                <svg width="18" height="13" viewBox="0 0 18 13"><path d="M9 0 L18 11 Q18 13 16 13 H2 Q0 13 0 11 Z" fill="#77787a" /></svg>
              </div>
            </div>
          </div>
        </div>
      </div>
      <div className="absolute left-[1018px] top-[120px] bottom-0 w-[2px] bg-[#c8c6c8]" />
    </div>
  );
}
